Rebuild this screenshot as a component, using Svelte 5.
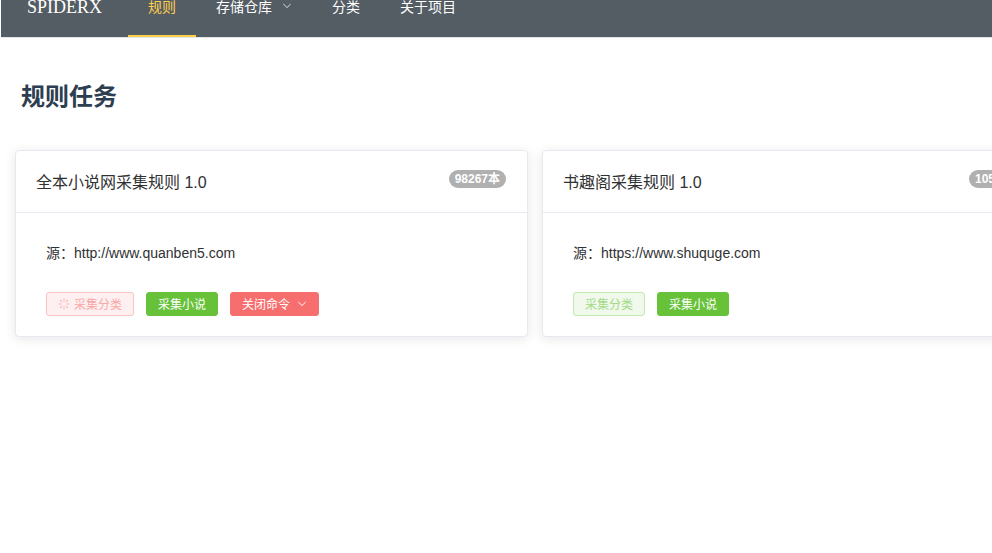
<script>
  const rules = [
    { title: '全本小说网采集规则 1.0', count: '98267本', src: 'http://www.quanben5.com', running: true },
    { title: '书趣阁采集规则 1.0', count: '105321本', src: 'https://www.shuquge.com', running: false }
  ];
  const ticks = [0, 45, 90, 135, 180, 225, 270, 315];
</script>

<div class="page">
  <header class="nav">
    <div class="logo">SPIDERX</div>
    <ul class="menu">
      <li class="active">规则</li>
      <li>存储仓库
        <svg class="arrow" width="10" height="6" viewBox="0 0 10 6"><path d="M1.3 1 5 4.6 8.7 1" fill="none" stroke="currentColor" stroke-width="1"/></svg>
      </li>
      <li>分类</li>
      <li>关于项目</li>
    </ul>
  </header>

  <h2 class="heading">规则任务</h2>

  <div class="cards">
    {#each rules as rule}
      <section class="card">
        <div class="card-head">
          <span class="title">{rule.title}</span>
          <span class="badge">{rule.count}</span>
        </div>
        <div class="card-body">
          <p class="source">源：{rule.src}</p>
          <div class="actions">
            {#if rule.running}
              <span class="btn danger-off">
                <svg class="spin" width="12" height="12" viewBox="0 0 12 12">
                  {#each ticks as t}
                    <rect x="5.3" y="0.5" width="1.4" height="3" fill="currentColor" transform="rotate({t} 6 6)"/>
                  {/each}
                </svg>
                采集分类
              </span>
            {:else}
              <span class="btn success-off">采集分类</span>
            {/if}
            <span class="btn success">采集小说</span>
            {#if rule.running}
              <span class="btn danger">关闭命令
                <svg class="arrow" width="10" height="6" viewBox="0 0 10 6"><path d="M1.3 1 5 4.6 8.7 1" fill="none" stroke="currentColor" stroke-width="1"/></svg>
              </span>
            {/if}
          </div>
        </div>
      </section>
    {/each}
  </div>
</div>

<style>
  :global(body) {
    margin: 0;
    background: #fff;
    overflow: hidden;
  }
  .page {
    width: 992px;
    height: 553px;
    overflow: hidden;
    font-family: "Liberation Sans", "Noto Sans CJK SC", sans-serif;
    color: #303133;
  }
  .nav {
    display: flex;
    height: 60px;
    margin: -23px 0 0 1px;
    background: #545c64;
    border-bottom: 1px solid #e6e6e6;
    box-sizing: content-box;
  }
  .logo {
    width: 127px;
    padding-left: 26px;
    box-sizing: border-box;
    font: 18px/61px "Liberation Serif", serif;
    color: #fff;
  }
  .menu {
    display: flex;
    list-style: none;
    margin: 0;
    padding: 0;
  }
  .menu li {
    display: flex;
    align-items: center;
    height: 60px;
    box-sizing: border-box;
    padding: 0 20px;
    border-bottom: 2px solid transparent;
    font-size: 14px;
    color: #fff;
    white-space: nowrap;
  }
  .menu li.active {
    color: #ffd04b;
    border-bottom-color: #ffd04b;
  }
  .menu .arrow {
    margin-left: 10px;
    color: #d8dadc;
  }
  .heading {
    margin: 0;
    padding: 42px 0 0 21px;
    font-size: 24px;
    line-height: 34px;
    font-weight: 700;
    color: #2c3e50;
  }
  .cards {
    display: flex;
    gap: 14px;
    padding: 36px 0 0 15px;
    width: 1200px;
  }
  .card {
    flex: none;
    width: 513px;
    height: 187px;
    box-sizing: border-box;
    background: #fff;
    border: 1px solid #e8e8f0;
    border-radius: 4px;
    box-shadow: 0 2px 12px rgba(0, 0, 0, 0.1);
  }
  .card-head {
    position: relative;
    height: 62px;
    box-sizing: border-box;
    border-bottom: 1px solid #e8e8f0;
    padding: 23px 20px 0;
    font-size: 16px;
    line-height: 18px;
    color: #303133;
  }
  .badge {
    position: absolute;
    top: 19px;
    right: 21px;
    height: 18px;
    padding: 0 6px;
    border-radius: 10px;
    background: #b0b0b0;
    color: #fff;
    font-size: 12px;
    font-weight: 700;
    line-height: 18px;
    white-space: nowrap;
  }
  .card-body {
    padding: 31px 30px 0;
  }
  .source {
    margin: 0;
    font-size: 14px;
    line-height: 18px;
    color: #303133;
  }
  .actions {
    display: flex;
    gap: 12px;
    margin-top: 30px;
  }
  .btn {
    display: inline-flex;
    align-items: center;
    justify-content: center;
    height: 24px;
    box-sizing: border-box;
    padding: 0 11px 2px;
    border: 1px solid transparent;
    border-radius: 3px;
    font-size: 12px;
    white-space: nowrap;
  }
  .btn .arrow {
    margin: 2px 0 0 7px;
    color: #fff;
  }
  .spin {
    margin: 2px 4px 0 0;
    opacity: 0.6;
  }
  .danger-off {
    background: #fef0f0;
    border-color: #fbc4c4;
    color: #f9a7a7;
  }
  .success-off {
    background: #f0f9eb;
    border-color: #c2e7b0;
    color: #a4da89;
  }
  .success {
    background: #67c23a;
    border-color: #67c23a;
    color: #fff;
  }
  .danger {
    background: #f76e6e;
    border-color: #f76e6e;
    color: #fff;
  }
</style>
